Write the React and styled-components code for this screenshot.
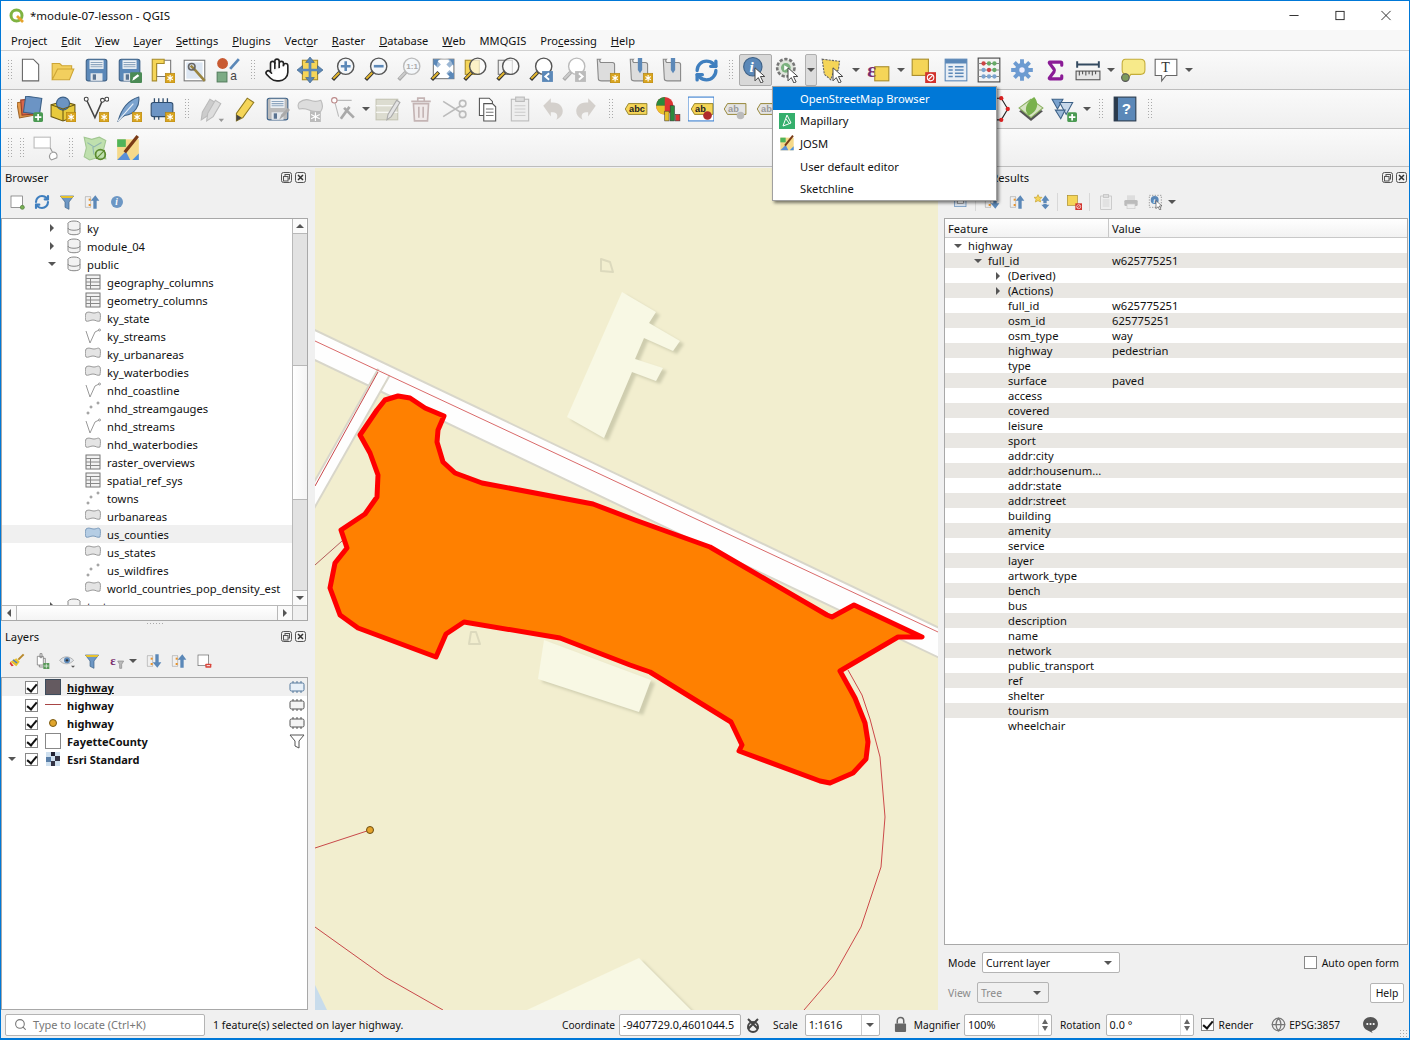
import React from 'react';
import styled, { createGlobalStyle } from 'styled-components';
import { Hand, RefreshCw, Search, Globe, Sigma } from 'lucide-react';

const GlobalStyle = createGlobalStyle`
  html, body { margin: 0; padding: 0; background: #f0f0f0; }
  body { font-family: "Noto Sans", "Open Sans", sans-serif; font-size: 11.2px; color: #111; }
`;

const BLUE = '#5b88b8';
const YEL = '#f5d558';

const Badge = () => (
  <g>
    <rect x="15" y="15" width="9" height="9" fill="#d9a520" stroke="#a87c10" strokeWidth=".5" />
    <path d="M19.5 16.5v6M17 18l5 3M22 18l-5 3" stroke="#fff" strokeWidth="1.1" />
  </g>
);
const Plus = () => (
  <g>
    <rect x="15" y="15" width="9" height="9" rx="1.5" fill="#4a9a52" />
    <path d="M19.5 16.5v6M16.5 19.5h6" stroke="#fff" strokeWidth="1.6" />
  </g>
);
const Mag = ({ children, fill = '#f4f7fa', handle = '#e5b82e', ring = '#555' }) => (
  <g>
    <path d="M9 14L2.5 21" stroke={handle === '#ccc' ? '#aaa' : '#333'} strokeWidth="3.4" />
    <path d="M8.5 14.5L3 20" stroke={handle} strokeWidth="1.8" />
    <circle cx="14.5" cy="8.5" r="7.5" fill={fill} stroke={ring} strokeWidth="1.3" />
    {children}
  </g>
);
const Cursor = () => (
  <path d="M12 10l0 12 3-3 2.5 5 2-1-2.5-5 4 0z" fill="#fff" stroke="#444" strokeWidth=".9" />
);
const Floppy = ({ c = BLUE }) => (
  <g>
    <rect x="3" y="2" width="19" height="20" rx="2" fill={c} stroke="#3d6187" />
    <rect x="6" y="3" width="13" height="8" fill="#eef2f6" />
    <path d="M7 5h11M7 7h11M7 9h11" stroke="#8ea6bf" />
    <rect x="7" y="15" width="11" height="7" fill="#e4e8ec" />
    <rect x="9" y="16" width="3" height="5" fill="#5a7391" />
  </g>
);
const Scroll = () => (
  <path d="M3 2h3c-1 1-1 2 0 3h11c1 0 2 1 2 2v15H7c-2 0-3-1-3-2z" fill="#ddd" stroke="#888" />
);
const Label = ({ t = 'abc', bg = YEL, fg = '#222' }) => (
  <g>
    <path d="M3 12l3-5h17v10H6z" fill={bg} stroke="#8b7a20" strokeWidth=".8" />
    <text x="6.5" y="15" fontSize="8.5" fontWeight="700" fontFamily="Liberation Sans" fill={fg}>{t}</text>
  </g>
);

const icons = {
  newFile: <path d="M5 2h10l5 5v15H5z" fill="#fff" stroke="#666" />,
  open: <path d="M2 6h7l2 2h9v3H7L2 21zM2 21l5-10h15l-4 10z" fill="#f2cf5e" stroke="#cda535" />,
  save: <Floppy />,
  saveAs: <g><Floppy /><rect x="13" y="14" width="11" height="10" rx="1" fill="#4a8a55" /><path d="M15 22l1-3 4-3 1.5 1.5-4 3z" fill="#fff" /></g>,
  layout: <g><path d="M7 3h13v15H7z" fill="#fff" stroke="#777" /><path d="M3 2h11v4H7v16H3z" fill={YEL} stroke="#a88c2a" /><Badge /></g>,
  layoutMgr: <g><rect x="2" y="3" width="19" height="19" fill="#fff" stroke="#777" /><rect x="4" y="5" width="15" height="15" fill="#dce6f2" /><path d="M8 8l4 4 9 10" stroke="#9a8540" strokeWidth="2.4" /><circle cx="9" cy="9" r="3" fill="none" stroke="#666" strokeWidth="1.5" /></g>,
  style: <g><circle cx="7" cy="6" r="5" fill="#c85a32" /><path d="M14 11l8-9" stroke={BLUE} strokeWidth="2.5" /><rect x="2" y="14" width="9" height="9" fill="#7cab85" stroke="#557f5f" /><text x="14" y="21" fontSize="11" fontFamily="Liberation Sans" fill="#444">a</text></g>,
  pan: <g><rect x="5" y="3" width="14" height="18" fill={YEL} stroke="#a88c2a" /><path d="M12 0l4 5h-8zM12 24l-4-5h8zM0 12l5-4v8zM24 12l-5 4V8z" fill={BLUE} stroke="#3d6187" strokeWidth=".6" /><path d="M12 4v16M4 12h16" stroke={BLUE} strokeWidth="2.5" /></g>,
  zoomIn: <Mag><path d="M14.5 4v9M10 8.5h9" stroke={BLUE} strokeWidth="2.4" /></Mag>,
  zoomOut: <Mag><path d="M10 8.5h9" stroke={BLUE} strokeWidth="2.4" /></Mag>,
  zoomOne: <Mag handle="#ccc" ring="#bbb"><text x="9.5" y="11.5" fontSize="7.5" fontWeight="700" fontFamily="Liberation Sans" fill="#aaa">1:1</text></Mag>,
  zoomFull: <g><rect x="4" y="2" width="19" height="18" fill="#fff" stroke="#777" /><path d="M4 2h6l-2 2 3 3-3 3-3-3-1 1zM23 2h-6l2 2-3 3 3 3 3-3 1 1zM23 20h-6l2-2-3-3 3-3 3 3 1-1z" fill={BLUE} /><Mag fill="#ffffff66" ring="#ffffff00" /></g>,
  zoomSel: <g><rect x="3" y="3" width="13" height="13" fill={YEL} stroke="#a88c2a" /><Mag fill="#ffffffaa" /></g>,
  zoomLayer: <g><rect x="3" y="3" width="13" height="13" fill="#eee" stroke="#777" /><Mag fill="#ffffffaa" /></g>,
  zoomLast: <g><Mag fill="#fff" /><rect x="13" y="13" width="10" height="10" fill={BLUE} /><path d="M19.5 15l-3.5 3 3.5 3" fill="none" stroke="#fff" strokeWidth="1.8" /></g>,
  zoomNext: <g><Mag fill="#fff" handle="#ccc" ring="#bbb" /><rect x="13" y="13" width="10" height="10" fill="#bbb" /><path d="M16.5 15l3.5 3-3.5 3" fill="none" stroke="#fff" strokeWidth="1.8" /></g>,
  bookNew: <g><Scroll /><Badge /></g>,
  bookPin: <g><Scroll /><path d="M10 1h4v11l-2 3-2-3z" fill={BLUE} /><Badge /></g>,
  bookShow: <g><Scroll /><path d="M10 1h4v11l-2 3-2-3z" fill={BLUE} /></g>,
  identify: <g><circle cx="10" cy="9" r="8.5" fill={BLUE} stroke="#3d6187" /><text x="7" y="14" fontSize="14" fontStyle="italic" fontWeight="700" fontFamily="Liberation Serif" fill="#fff">i</text><Cursor /></g>,
  osm: <g><circle cx="10" cy="10" r="8" fill="#dfe4dc" stroke="#777" strokeWidth="2.4" strokeDasharray="3 1.5" /><circle cx="10" cy="10" r="4.5" fill="#7bb27e" /><path d="M8.5 7.5l4 2.5-4 2.5z" fill="#fff" /><Cursor /></g>,
  select: <g><path d="M2 2l16 2-1 8-5 3-2 6-6-5z" fill={YEL} stroke="#666" strokeDasharray="2 1" /><Cursor /></g>,
  expr: <g><rect x="9" y="9" width="13" height="13" fill={YEL} stroke="#a88c2a" /><text x="2" y="18" fontSize="19" fontWeight="700" fontFamily="Liberation Serif" fill="#7a2d6e">ε</text></g>,
  deselect: <g><rect x="2" y="2" width="15" height="15" fill={YEL} stroke="#a88c2a" /><rect x="14" y="14" width="10" height="10" fill="#d2322d" /><circle cx="19" cy="19" r="3" fill="none" stroke="#fff" /><path d="M17 21l4-4" stroke="#fff" /></g>,
  table: <g><rect x="2" y="2" width="20" height="20" fill="#e8eef5" stroke={BLUE} /><rect x="2" y="2" width="20" height="4" fill={BLUE} /><path d="M5 9h4M11 9h8M5 12h4M11 12h8M5 15h4M11 15h8M5 18h4M11 18h8" stroke={BLUE} strokeWidth="1.3" /></g>,
  calc: <g><rect x="2" y="1" width="20" height="22" fill="#f4f4f4" stroke="#444" /><path d="M2 6h20M2 12h20M2 18h20" stroke="#888" /><circle cx="7" cy="6" r="2" fill="#c44" /><circle cx="12" cy="6" r="2" fill="#6a6" /><circle cx="17" cy="6" r="2" fill="#6a6" /><circle cx="7" cy="12" r="2" fill="#7ba3cf" /><circle cx="12" cy="12" r="2" fill="#c44" /><circle cx="17" cy="12" r="2" fill="#6a6" /><circle cx="7" cy="18" r="2" fill="#7ba3cf" /><circle cx="12" cy="18" r="2" fill="#7ba3cf" /><circle cx="17" cy="18" r="2" fill="#7ba3cf" /></g>,
  gear: <g><path d="M12 2v20M2 12h20M5 5l14 14M19 5L5 19" stroke="#6d9bd1" strokeWidth="3.6" /><circle cx="12" cy="12" r="6.5" fill="#6d9bd1" /><circle cx="12" cy="12" r="2.5" fill="#eef" /></g>,
  ruler: <g><path d="M2 7h20M2 4v6M22 4v6" stroke="#334a60" strokeWidth="1.8" /><rect x="1" y="13" width="22" height="8" fill="#e6e6e6" stroke="#555" /><path d="M4 13v4M7 13v3M10 13v4M13 13v3M16 13v4M19 13v3" stroke="#555" /></g>,
  tip: <g><path d="M5 2h14q4 0 4 4v6q0 4-4 4H10l-3 4-1-4q-4 0-4-4V6q0-4 3-4z" fill="#f7ea8a" stroke="#c4ad38" /><circle cx="5" cy="19" r="3.5" fill="#7c9a5c" stroke="#555" /></g>,
  textBox: <g><path d="M2 2h20v15H12l-4 5v-5H2z" fill="#fff" stroke="#666" /><text x="7.5" y="14" fontSize="13" fontFamily="Liberation Serif" fill="#333">T</text></g>,
  addLayers: <g><rect x="1" y="5" width="14" height="14" fill="#e59a4a" stroke="#a0662a" transform="rotate(-10 8 12)" /><rect x="4" y="3" width="14" height="14" fill="#d9664a" stroke="#963f2a" transform="rotate(-5 11 10)" /><rect x="7" y="1" width="15" height="15" fill="#6c94c4" stroke="#3d6187" transform="rotate(8 14 8)" /><Plus /></g>,
  box3d: <g><path d="M1 8l11-3 11 3v11l-11 4-11-4z" fill="#e8ca3c" stroke="#6b5a14" /><circle cx="12" cy="7" r="6" fill="#6c94c4" stroke="#3d6187" /><path d="M1 8l11 4 11-4M12 12v11" fill="none" stroke="#6b5a14" /><Badge /></g>,
  vertex: <g><path d="M3 3l8 17 7-16h4" fill="none" stroke="#444" strokeWidth="1.4" /><circle cx="3" cy="3" r="1.8" fill="#fff" stroke="#444" /><circle cx="18" cy="4" r="1.8" fill="#fff" stroke="#444" /><circle cx="22" cy="3" r="1.8" fill="#fff" stroke="#444" /><Badge /></g>,
  feather: <g><path d="M2 23C5 12 11 4 21 1c1 7-3 16-13 17-2 1-4 3-6 5z" fill="#7ba3cf" stroke="#3d6187" /><path d="M2 23L16 7" stroke="#e8f0f8" /><Badge /></g>,
  chip: <g><rect x="2" y="6" width="20" height="13" rx="2" fill="#6c94c4" stroke="#2f4d6e" /><path d="M5 2v4M9 2v4M13 2v4M17 2v4M5 19v3M9 19v3" stroke="#2f4d6e" strokeWidth="1.2" /><Badge /></g>,
  pencils: <g><path d="M3 22l1-7 7-12 5 3-7 12z" fill="#ccc" stroke="#bbb" /><path d="M8 23l1-7 7-12 5 3-7 12z" fill="#ddd" stroke="#bbb" /><path d="M19 21h5l-2.5 3z" fill="#999" /></g>,
  pencil: <g><path d="M5 23l0-7 10-14 6 4-10 14z" fill={YEL} stroke="#8f7a22" /><path d="M5 23l0-6 5 3z" fill="#444" /></g>,
  saveEdit: <g><Floppy c="#bbb" /><path d="M14 22l2-5 6-6 2 2-6 6z" fill="#aaa" /></g>,
  polyBadge: <g><path d="M2 6q5-4 10-2t10 0q3 6 0 10-7 1-11-1t-9-1q-2-3 0-6z" fill="#ddd" stroke="#bbb" /><rect x="12" y="14" width="10" height="10" fill="#bbb" /><path d="M17 15v8M13 17l8 4M21 17l-8 4" stroke="#fff" /></g>,
  digitize: <g><path d="M4 4l4 15M4 4h16" stroke="#bbb" /><circle cx="4" cy="4" r="2.5" fill="#fff" stroke="#b88" /><path d="M10 21l8-11M13 11l9 9" stroke="#aaa" strokeWidth="2.5" /></g>,
  editTable: <g><rect x="1" y="3" width="20" height="19" fill="#dcdcd0" stroke="#c4c4b4" /><path d="M1 9h20M1 15h20" stroke="#fff" /><path d="M11 22l1-5 8-13 3 2-8 13z" fill="#e4e4e4" stroke="#aaa" /></g>,
  trash: <g><path d="M5 7h14l-1 16H6z" fill="#f0eaea" stroke="#c4b4b4" strokeWidth="1.5" /><path d="M3 5h18M9 5V2h6v3M10 10v10M14 10v10" stroke="#c4b4b4" strokeWidth="1.5" fill="none" /></g>,
  scissors: <g><circle cx="20" cy="7" r="3" fill="none" stroke="#bbb" strokeWidth="1.5" /><circle cx="20" cy="17" r="3" fill="none" stroke="#bbb" strokeWidth="1.5" /><path d="M2 5l16 10M2 19l16-10" stroke="#bbb" strokeWidth="1.5" /></g>,
  copy: <g><path d="M5 2h9l3 3v13H5z" fill="#fff" stroke="#555" /><path d="M9 7h8l3 3v13H9z" fill="#fff" stroke="#555" /><path d="M11 12h7M11 15h7M11 18h7" stroke="#777" /></g>,
  paste: <g><rect x="4" y="3" width="16" height="20" fill="#eee" stroke="#bbb" /><rect x="8" y="1" width="8" height="4" fill="#ddd" stroke="#bbb" /><path d="M7 9h10M7 12h10M7 15h10M7 18h10" stroke="#ccc" /></g>,
  undo: <path d="M3 9l7-7v4h2c6 0 9 4 9 8 0 3-2 6-6 8 2-3 1-7-3-7h-2v4z" fill="#d4d0cc" />,
  redo: <path d="M21 9l-7-7v4h-2C6 6 3 10 3 14c0 3 2 6 6 8-2-3-1-7 3-7h2v4z" fill="#d4d0cc" />,
  abc: <Label />,
  pie: <g><circle cx="9" cy="9" r="8" fill="#d33" /><path d="M9 9V1a8 8 0 00-8 8z" fill="#2a8a3c" /><path d="M9 9H1a8 8 0 008 8z" fill="#e8c22c" /><rect x="9" y="14" width="4" height="9" fill="#e8c22c" stroke="#333" strokeWidth=".5" /><rect x="14" y="9" width="4" height="14" fill="#2a8a3c" stroke="#333" strokeWidth=".5" /><rect x="19" y="17" width="4" height="6" fill="#d33" stroke="#333" strokeWidth=".5" /></g>,
  abPin: <g><rect x="0" y="1" width="24" height="22" fill="#fff" stroke="#3a7fd0" /><Label t="ab" /><circle cx="18" cy="18" r="4" fill="#b02b2b" /></g>,
  abOff: <g><Label t="ab" bg="#e4e4e4" fg="#999" /><circle cx="18" cy="18" r="3.5" fill="#bbb" /></g>,
  abOff2: <g><Label t="abc" bg="#e4e4e4" fg="#999" /></g>,
  hexEdge: <g><path d="M7 2l8 0 6 10-6 10H7L1 12z" fill="none" stroke="#222" /><circle cx="21" cy="12" r="2" fill="#d22" /><circle cx="15" cy="2" r="2" fill="#d22" /><circle cx="15" cy="22" r="2" fill="#d22" /></g>,
  leaf: <g><path d="M12 23L1 14l11-7 11 7z" fill="#555" /><path d="M12 20L1 11l11-8 11 8z" fill="#d8e4c4" stroke="#8ab060" /><path d="M10 18C4 12 9 5 15 1c5 6 3 13-5 17z" fill="#79b14c" /></g>,
  triangles: <g><path d="M1 3h10l-5 9z" fill="#7ba3cf" stroke="#3d6187" /><path d="M8 6h12l-6 11z" fill="#c8d8ea" stroke="#3d6187" /><path d="M4 13h9l-4 8z" fill="#9ab8d8" stroke="#3d6187" /><Plus /></g>,
  helpBook: <g><rect x="2" y="1" width="20" height="22" fill="#5b88b8" stroke="#2a3a4c" /><rect x="2" y="1" width="3.5" height="22" fill="#2a3a4c" /><text x="9" y="17" fontSize="14" fontWeight="700" fontFamily="Liberation Sans" fill="#fff">?</text></g>,
  rectHand: <g><rect x="1" y="2" width="15" height="10" fill="#fff" stroke="#bbb" /><path d="M16 12l2 4M17 23c-3-2-2-6 1-7s5 2 4 5z" fill="#fff" stroke="#999" /></g>,
  osmMap: <g><path d="M2 2l7 2 7-2 6 3-2 8 2 9-8-1-7 2-5-3 2-8z" fill="#bfe0ae" stroke="#a2c792" /><path d="M5 7l6 4 7-4M10 11l1 7" stroke="#8fb4b0" fill="none" /><circle cx="17" cy="18" r="4.5" fill="none" stroke="#5b8b2e" strokeWidth="1.6" /><path d="M13 22l8-8" stroke="#5b8b2e" /></g>,
  josm: <g><rect x="2" y="4" width="20" height="19" fill="#f5d98a" /><rect x="2" y="4" width="8" height="7" fill="#4fb45a" /><path d="M10 15l4 8H2z" fill="#5a8fd8" /><path d="M16 23l6-6v6z" fill="#4a90e0" /><path d="M9 16L21 1" stroke="#7a3b16" strokeWidth="3" /></g>,
  addGeo: <g><rect x="3" y="3" width="17" height="17" fill="#fff" stroke="#666" /><circle cx="20" cy="20" r="3" fill="#7ab055" stroke="#4a7a35" /></g>,
  filter: <g><path d="M2 3h20l-7 9v11l-6-3v-8z" fill="#6d97c4" stroke="#3d6187" /><path d="M2 3h20l-2 3H4z" fill="#e8c22c" /></g>,
  collapse: <g><rect x="2" y="4" width="8" height="16" fill="none" stroke="#888" strokeDasharray="2 1" /><rect x="7" y="7" width="3" height="3" fill="#e8932c" /><rect x="7" y="15" width="3" height="3" fill="#e8932c" /><path d="M17 2l6 8h-4v12h-5V10h-4z" fill="#5b88b8" /></g>,
  expand: <g><rect x="2" y="4" width="8" height="16" fill="none" stroke="#888" strokeDasharray="2 1" /><rect x="7" y="7" width="3" height="3" fill="#e8932c" /><rect x="7" y="15" width="3" height="3" fill="#e8932c" /><path d="M17 22l6-8h-4V2h-5v12h-4z" fill="#5b88b8" /></g>,
  infoDot: <g><circle cx="12" cy="12" r="9" fill="#6d97c4" /><text x="9.5" y="17" fontSize="14" fontStyle="italic" fontWeight="700" fontFamily="Liberation Serif" fill="#fff">i</text></g>,
  brush: <g><path d="M14 10L22 2" stroke="#b8892c" strokeWidth="3" /><path d="M2 13l9-5 5 5-5 7z" fill="#e8c22c" /><path d="M2 13l5 6-3 1-3-4z" fill="#d33" /><path d="M6 10l6 5" stroke="#4a78c0" strokeWidth="2" /></g>,
  addGroup: <g><path d="M8 8h9v13H8z" fill="#eee" stroke="#666" /><path d="M5 5h9v13H5z" fill="#fff" stroke="#666" /><path d="M9 1h3v6H9z" fill="none" stroke="#666" /><rect x="14" y="15" width="9" height="9" fill="#5a9a5a" /><path d="M18.5 16v7M15 19.5h7" stroke="#fff" /></g>,
  eye: <g><path d="M1 11c5-7 15-7 21 0-6 7-16 7-21 0z" fill="#dfe3e8" stroke="#999" /><circle cx="12" cy="11" r="4.5" fill="#5b88b8" /><circle cx="12" cy="11" r="1.8" fill="#333" /><path d="M18 19h6l-3 3z" fill="#555" /></g>,
  exprFilter: <g><text x="2" y="18" fontSize="19" fontWeight="700" fontFamily="Liberation Serif" fill="#7a2d6e">ε</text><path d="M13 12h9l-3 5v6h-3v-6z" fill="#bbb" stroke="#888" /></g>,
  removeRect: <g><rect x="3" y="3" width="16" height="16" fill="#fff" stroke="#666" /><rect x="14" y="16" width="9" height="6" rx="1" fill="#d9463c" /><path d="M16 19h5" stroke="#fff" strokeWidth="1.4" /></g>,
  identMode: <g><rect x="4" y="5" width="17" height="14" fill="#dce6f2" stroke={BLUE} /><rect x="8" y="10" width="9" height="4" fill="#fff" stroke="#777" /></g>,
  printer: <g><rect x="6" y="2" width="12" height="7" fill="#ddd" /><rect x="2" y="9" width="20" height="9" rx="2" fill="#bbb" /><rect x="6" y="15" width="12" height="7" fill="#eee" stroke="#ccc" /></g>,
  identTool: <g><rect x="2" y="2" width="18" height="18" fill="none" stroke="#777" strokeDasharray="2 2" /><circle cx="10" cy="9" r="6" fill={BLUE} /><text x="8" y="13" fontSize="10" fontStyle="italic" fontWeight="700" fontFamily="Liberation Serif" fill="#fff">i</text><Cursor /></g>,
  expandNew: <g><path d="M6 1l2 4 4 0-3 3 1 4-4-2-4 2 1-4-3-3 4 0z" fill={YEL} stroke="#c4a030" /><path d="M17 2l6 8h-4v4h-5v-4h-3z" fill="#5b88b8" /><path d="M17 23l6-7h-4v-1h-5v1h-3z" fill="#5b88b8" /></g>,
};

// toolbars -------------------------------------------------------------------
const topRows = [
  {
    height: 39,
    items: [':', 'newFile', 'open', 'save', 'saveAs', 'layout', 'layoutMgr', 'style', '|', 'hand', 'pan', 'zoomIn', 'zoomOut', '~zoomOne', 'zoomFull', 'zoomSel', 'zoomLayer', 'zoomLast', '~zoomNext', 'bookNew', 'bookPin', 'bookShow', 'refresh', '|', '!identify', 'osm', 'v!', 'select', 'v', 'expr', 'v', 'deselect', 'table', 'calc', 'gear', 'sigma', 'ruler', 'v', 'tip', 'textBox', 'v'],
  },
  {
    height: 39,
    items: [':', 'addLayers', 'box3d', 'vertex', 'feather', 'chip', '|', 'pencils', 'pencil', 'saveEdit', 'polyBadge', 'digitize', 'v', 'editTable', 'trash', 'scissors', 'copy', 'paste', 'undo', 'redo', '|', 'abc', 'pie', 'abPin', 'abOff', 'abOff2', '', '', '', '', '', '', 'hexEdge', 'leaf', 'triangles', 'v', '|', 'helpBook', '|'],
  },
  {
    height: 38,
    items: [':', '|', 'rectHand', '|', 'osmMap', 'josm'],
  },
];

const treeRows = [
  [1, 'right', 'db', 'ky'],
  [1, 'right', 'db', 'module_04'],
  [1, 'down', 'db', 'public'],
  [2, '', 'table', 'geography_columns'],
  [2, '', 'table', 'geometry_columns'],
  [2, '', 'poly', 'ky_state'],
  [2, '', 'line', 'ky_streams'],
  [2, '', 'poly', 'ky_urbanareas'],
  [2, '', 'poly', 'ky_waterbodies'],
  [2, '', 'line', 'nhd_coastline'],
  [2, '', 'dots', 'nhd_streamgauges'],
  [2, '', 'line', 'nhd_streams'],
  [2, '', 'poly', 'nhd_waterbodies'],
  [2, '', 'table', 'raster_overviews'],
  [2, '', 'table', 'spatial_ref_sys'],
  [2, '', 'dots', 'towns'],
  [2, '', 'poly', 'urbanareas'],
  [2, '', 'polyBlue', 'us_counties'],
  [2, '', 'poly', 'us_states'],
  [2, '', 'dots', 'us_wildfires'],
  [2, '', 'poly', 'world_countries_pop_density_est'],
  [1, 'right', 'db', 'test'],
];

const treeIcon = {
  db: <g fill="#f2f2f2" stroke="#888"><ellipse cx="8" cy="3.5" rx="6" ry="2.5" /><path d="M2 3.5v9c0 3 12 3 12 0v-9" /><path d="M2 8c0 3 12 3 12 0" fill="none" /></g>,
  table: <g><rect x="1" y="1" width="14" height="14" fill="#f2f2f2" stroke="#777" /><path d="M1 4.5h14M1 8h14M1 11.5h14M5.5 4.5V15" stroke="#888" fill="none" /></g>,
  poly: <path d="M1 3c3-2 5 0 8 0s4-2 6 0c1 3 0 6 0 8-3 1-4-1-7-1s-5 2-7 1C0 9 0 6 1 3z" fill="#e4e4e4" stroke="#999" />,
  polyBlue: <path d="M1 3c3-2 5 0 8 0s4-2 6 0c1 3 0 6 0 8-3 1-4-1-7-1s-5 2-7 1C0 9 0 6 1 3z" fill="#b5cde4" stroke="#7d9cbc" />,
  line: <g fill="none" stroke="#999"><path d="M1 3l4 12 5-11 4-2" /><circle cx="14.5" cy="2" r="1" /></g>,
  dots: <g fill="#fff" stroke="#888"><circle cx="3" cy="13" r="1" /><circle cx="6" cy="7" r="1" /><circle cx="13" cy="3" r="1" /></g>,
};

const layerRows = [
  { symbol: 'fill', name: 'highway', active: true, mark: 'chip' },
  { symbol: 'line', name: 'highway', mark: 'chip' },
  { symbol: 'point', name: 'highway', mark: 'chip' },
  { symbol: 'empty', name: 'FayetteCounty', mark: 'filter' },
  { symbol: 'raster', name: 'Esri Standard', open: true },
];

const resultRows = [
  [0, 'down', 'highway', ''],
  [1, 'down', 'full_id', 'w625775251'],
  [2, 'right', '(Derived)', ''],
  [2, 'right', '(Actions)', ''],
  [2, '', 'full_id', 'w625775251'],
  [2, '', 'osm_id', '625775251'],
  [2, '', 'osm_type', 'way'],
  [2, '', 'highway', 'pedestrian'],
  [2, '', 'type', ''],
  [2, '', 'surface', 'paved'],
  ...['access', 'covered', 'leisure', 'sport', 'addr:city', 'addr:housenum...', 'addr:state', 'addr:street', 'building', 'amenity', 'service', 'layer', 'artwork_type', 'bench', 'bus', 'description', 'name', 'network', 'public_transport', 'ref', 'shelter', 'tourism', 'wheelchair'].map((n) => [2, '', n, '']),
];

const menus = [
  ['Pro', 'j', 'ect'], ['', 'E', 'dit'], ['', 'V', 'iew'], ['', 'L', 'ayer'], ['', 'S', 'ettings'], ['', 'P', 'lugins'],
  ['Vect', 'o', 'r'], ['', 'R', 'aster'], ['', 'D', 'atabase'], ['', 'W', 'eb'], ['MMQGIS', '', ''], ['Pro', 'c', 'essing'], ['', 'H', 'elp'],
];

const Ico = ({ name, size = 26 }) => (
  <svg width={size} height={size} viewBox="0 0 24 24">{icons[name]}</svg>
);

const ToolbarIcon = ({ item }) => {
  if (item === ':') return <HandleSlot $narrow><Dots /></HandleSlot>;
  if (item === '|') return <HandleSlot><Dots /></HandleSlot>;
  if (item === 'v') return <DropSlot><Arrow /></DropSlot>;
  if (item === 'v!') return <DropSlot $pressed><Arrow /></DropSlot>;
  if (item === '') return <Tool />;
  if (item === 'hand') return <Tool><Hand size={26} fill="#fff" color="#222" strokeWidth={1.5} /></Tool>;
  if (item === 'refresh') return <Tool><RefreshCw size={25} color="#3f7fbf" strokeWidth={3.2} /></Tool>;
  if (item === 'sigma') return <Tool><Sigma size={25} color="#8a1b96" strokeWidth={3} /></Tool>;
  const active = item[0] === '!';
  const off = item[0] === '~';
  const name = active || off ? item.slice(1) : item;
  return <Tool $active={active}><Ico name={name} /></Tool>;
};

const DockHead = ({ title }) => (
  <DockHeader>
    <span>{title}</span>
    <DockButtons>
      <DockButton viewBox="0 0 11 11"><rect x=".5" y=".5" width="10" height="10" rx="2" fill="none" stroke="#555" /><rect x="4" y="2.5" width="4.5" height="4.5" fill="none" stroke="#555" /><rect x="2.5" y="4.5" width="4.5" height="4.5" fill="#eee" stroke="#555" /></DockButton>
      <DockButton viewBox="0 0 11 11"><rect x=".5" y=".5" width="10" height="10" rx="2" fill="none" stroke="#555" /><path d="M3 3l5 5M8 3l-5 5" stroke="#333" strokeWidth="1.5" /></DockButton>
    </DockButtons>
  </DockHeader>
);

export default function App() {
  return (
    <>
      <GlobalStyle />
      <Window>
        <TitleBar>
          <QgisLogo viewBox="0 0 16 16">
            <circle cx="7.5" cy="7.5" r="5.5" fill="none" stroke="#7fb342" strokeWidth="3" />
            <path d="M8 8l6 6" stroke="#e5a32b" strokeWidth="2.6" />
          </QgisLogo>
          <TitleText>*module-07-lesson - QGIS</TitleText>
          <WinButtons>
            <WinButton viewBox="0 0 12 12"><path d="M1 6h10" stroke="#222" /></WinButton>
            <WinButton viewBox="0 0 12 12"><rect x="1.5" y="1.5" width="9" height="9" fill="none" stroke="#222" /></WinButton>
            <WinButton viewBox="0 0 12 12"><path d="M1 1l10 10M11 1L1 11" stroke="#222" /></WinButton>
          </WinButtons>
        </TitleBar>
        <MenuBar>
          {menus.map(([a, u, b]) => (
            <MenuItem key={a + u + b}>{a}<u>{u}</u>{b}</MenuItem>
          ))}
        </MenuBar>
        {topRows.map((row, i) => (
          <ToolRow key={i} $height={row.height}>
            {row.items.map((item, j) => <ToolbarIcon key={j} item={item} />)}
          </ToolRow>
        ))}
        <Main>
          <LeftDock>
            <DockHead title="Browser" />
            <DockTools>
              {['addGeo', 'refresh', 'filter', 'collapse', 'infoDot'].map((n) => (
                <SmallTool key={n}>{n === 'refresh' ? <RefreshCw size={16} color="#3f7fbf" strokeWidth={3.2} /> : <Ico name={n} size={16} />}</SmallTool>
              ))}
            </DockTools>
            <TreeFrame>
              <TreeInner>
                <TreeList>
                  {treeRows.map(([depth, arrow, icon, name]) => (
                    <TreeRow key={name} $active={name === 'us_counties'} $depth={depth}>
                      {depth === 1 && <Twisty>{arrow && <Caret $dir={arrow} />}</Twisty>}
                      <TreeIcon viewBox="0 0 16 16" $depth={depth}>{treeIcon[icon]}</TreeIcon>
                      <span>{name}</span>
                    </TreeRow>
                  ))}
                </TreeList>
                <VScroll>
                  <ScrollEnd><Caret $dir="up" /></ScrollEnd>
                  <ScrollTrack $h={131} />
                  <ScrollThumb />
                  <ScrollTrack $fill />
                  <ScrollEnd><Caret $dir="down" /></ScrollEnd>
                </VScroll>
              </TreeInner>
              <HScroll>
                <ScrollEnd $wide><Caret $dir="left" /></ScrollEnd>
                <HThumb />
                <ScrollEnd $wide><Caret $dir="right" /></ScrollEnd>
                <Corner />
              </HScroll>
            </TreeFrame>
            <Splitter><SplitDots /></Splitter>
            <DockHead title="Layers" />
            <DockTools>
              {['brush', 'addGroup', 'eye', 'filter', 'exprFilter'].map((n) => (
                <SmallTool key={n}><Ico name={n} size={16} /></SmallTool>
              ))}
              <MiniDrop><Arrow /></MiniDrop>
              {['expand', 'collapse', 'removeRect'].map((n) => (
                <SmallTool key={n}><Ico name={n} size={16} /></SmallTool>
              ))}
            </DockTools>
            <LayerList>
              {layerRows.map((l, i) => (
                <LayerRow key={i} $active={l.active}>
                  <LayerTwisty>{l.open && <Caret $dir="down" />}</LayerTwisty>
                  <LayerCheck $on />
                  <LayerSymbol $kind={l.symbol}>
                    {l.symbol === 'raster' && (
                      <svg width="14" height="14" viewBox="0 0 14 14">
                        <rect width="14" height="14" fill="#cfe0ef" />
                        <rect x="5" width="4" height="4" fill="#223" />
                        <rect y="5" width="5" height="5" fill="#5a7fa8" />
                        <rect x="9" y="4" width="5" height="5" fill="#334" />
                        <rect x="5" y="9" width="4" height="5" fill="#334" />
                      </svg>
                    )}
                  </LayerSymbol>
                  <LayerName $active={l.active}>{l.name}</LayerName>
                  {l.mark && (
                    <LayerMark viewBox="0 0 16 16">
                      {l.mark === 'chip' ? (
                        <g fill={l.active ? '#e8f0f8' : '#f4f4f4'} stroke={l.active ? '#55789c' : '#555'}>
                          <rect x="1" y="4" width="14" height="8" rx="1.5" />
                          <path d="M4 2v2M8 2v2M12 2v2M4 12v2M8 12v2M12 12v2" />
                        </g>
                      ) : (
                        <path d="M1 2h14l-5 6v7l-4-2V8z" fill="#fff" stroke="#555" />
                      )}
                    </LayerMark>
                  )}
                </LayerRow>
              ))}
            </LayerList>
          </LeftDock>

          <VSplit $left />
          <MapCanvas>
            <MapSvg viewBox="315 168 623 842">
              <defs>
                <filter id="bldg" x="-20%" y="-20%" width="140%" height="140%">
                  <feDropShadow dx="4" dy="3" stdDeviation="1.5" floodColor="#cfcdaf" />
                </filter>
              </defs>
              <rect x="315" y="168" width="623" height="842" fill="#f2eecf" />
              <path d="M315 985l12 25h-12z" fill="#c8dcec" />
              <g fill="#f8f8e4" filter="url(#bldg)">
                <path d="M622 292l34 20-7 11 31 18-7 10-29-13-9 21 28 9-7 13-24-9-28 66-37-21z" />
                <path d="M544 640l107 40-12 32-101-33z" />
                <path d="M527 1010l112-52 52 52z" />
              </g>
              <g fill="#f2eecf" stroke="#dcd9bd" strokeWidth="2" strokeLinejoin="round">
                <path d="M601 259l9 3 3 10-12-1z" />
                <path d="M471 632l5 0 4 12-11 0z" />
              </g>
              <g fill="none">
                <path d="M300 338L950 648" stroke="#d8d6ca" strokeWidth="29" />
                <path d="M300 338L950 648" stroke="#fefefe" strokeWidth="25" />
                <path d="M384 372L300 520" stroke="#d8d6ca" strokeWidth="15" />
                <path d="M384 372L300 520" stroke="#fefefe" strokeWidth="11" />
                <path d="M315 341L938 632" stroke="#d96a6a" />
                <path d="M378 372L315 486" stroke="#c8484a" />
                <path d="M315 565L342 541" stroke="#b25a5a" />
                <path d="M848 670l14 25 8 24 10 38 5 60-4 50-20 60-27 48-30 35" stroke="#cc4a4a" />
                <path d="M315 848L370 830" stroke="#c8484a" />
                <path d="M315 927l70 50 58 33" stroke="#c8484a" />
              </g>
              <circle cx="370" cy="830" r="3.5" fill="#e5a32b" stroke="#6b4d12" />
              <path
                d="M360 435L377 410 385 400 398 396 410 398 425 408 444 416 438 430 437 442 443 462 455 473 482 483 593 504 635 520 710 547 827 615 832 617 854 605 922 637 898 637 840 671 855 698 865 723 868 742 866 759 853 773 830 783 820 781 739 751 742 745 731 722 650 672 630 665 560 638 464 622 446 634 436 657 358 628 340 615 330 588 335 563 347 548 341 530 365 514 377 497 378 475 370 453z"
                fill="#ff8000"
                stroke="#ff0000"
                strokeWidth="5"
                strokeLinejoin="round"
              />
            </MapSvg>
          </MapCanvas>
          <VSplit />

          <RightDock>
            <DockHead title="Identify Results" />
            <DockTools>
              <SmallTool><Ico name="identMode" size={16} /></SmallTool>
              <ToolGap />
              <SmallTool><Ico name="expand" size={16} /></SmallTool>
              <SmallTool><Ico name="collapse" size={16} /></SmallTool>
              <SmallTool><Ico name="expandNew" size={16} /></SmallTool>
              <ToolGap />
              <SmallTool><Ico name="deselect" size={16} /></SmallTool>
              <ToolGap />
              <SmallTool><Ico name="paste" size={16} /></SmallTool>
              <SmallTool><Ico name="printer" size={16} /></SmallTool>
              <SmallTool><Ico name="identTool" size={16} /></SmallTool>
              <MiniDrop><Arrow /></MiniDrop>
            </DockTools>
            <ResultTable>
              <ResultHead>
                <HeadCell $first>Feature</HeadCell>
                <HeadCell>Value</HeadCell>
              </ResultHead>
              {resultRows.map(([depth, arrow, name, value], i) => (
                <ResultRow key={i} $alt={i % 2 === 1}>
                  <FeatureCell $depth={depth}>
                    <ResultTwisty>{arrow && <Caret $dir={arrow} />}</ResultTwisty>
                    {name}
                  </FeatureCell>
                  <ValueCell>{value}</ValueCell>
                </ResultRow>
              ))}
            </ResultTable>
            <FormArea>
              <FormRow>
                <FormLabel>Mode</FormLabel>
                <Combo $width={138}>Current layer<Arrow /></Combo>
                <AutoOpen><OptionCheck />Auto open form</AutoOpen>
              </FormRow>
              <FormRow>
                <FormLabel $off>View</FormLabel>
                <Combo $width={72} $off>Tree<Arrow /></Combo>
                <HelpButton>Help</HelpButton>
              </FormRow>
            </FormArea>
          </RightDock>
        </Main>

        <StatusBar>
          <Locator><Search size={13} color="#777" />Type to locate (Ctrl+K)</Locator>
          <StatusMessage>1 feature(s) selected on layer highway.</StatusMessage>
          <StatusLabel>Coordinate</StatusLabel>
          <Field $width={122}>-9407729.0,4601044.5</Field>
          <StatusIcon viewBox="0 0 16 16">
            <path d="M3 2l10 10M13 2L3 12" stroke="#444" strokeWidth="2" />
            <circle cx="8" cy="10" r="5" fill="none" stroke="#444" strokeWidth="2" />
          </StatusIcon>
          <ScaleLabel>Scale</ScaleLabel>
          <Field $width={75}>1:1616<FieldDrop><Arrow /></FieldDrop></Field>
          <LockIcon viewBox="0 0 14 18">
            <path d="M3.5 8V5a3.5 3.5 0 017 0v3" fill="none" stroke="#666" strokeWidth="1.6" />
            <rect x="1" y="8" width="12" height="9" rx="1" fill="#666" />
          </LockIcon>
          <StatusLabel>Magnifier</StatusLabel>
          <Field $width={88}>100%<Spin><SpinUp /><SpinDown /></Spin></Field>
          <RotationLabel>Rotation</RotationLabel>
          <Field $width={88}>0.0 °<Spin><SpinUp /><SpinDown /></Spin></Field>
          <RenderBox><OptionCheck $on />Render</RenderBox>
          <Epsg><Globe size={15} color="#777" />EPSG:3857</Epsg>
          <BubbleIcon viewBox="0 0 16 16">
            <path d="M8 1c4 0 7 3 7 6.5S12 14 9 14l1 2-5-2.5C2.5 12.5 1 10 1 7.5 1 4 4 1 8 1z" fill="#555" />
            <circle cx="5" cy="7.5" r="1" fill="#fff" />
            <circle cx="8" cy="7.5" r="1" fill="#fff" />
            <circle cx="11" cy="7.5" r="1" fill="#fff" />
          </BubbleIcon>
          <Grip />
        </StatusBar>

        <Popup>
          <PopupItem $active>OpenStreetMap Browser</PopupItem>
          <PopupItem>
            <PopupIcon viewBox="0 0 16 16">
              <rect width="16" height="16" fill="#35af6d" />
              <path d="M8 2L4 13l8-3zM7 6l3 4" fill="none" stroke="#fff" />
            </PopupIcon>
            Mapillary
          </PopupItem>
          <PopupItem>
            <PopupIcon viewBox="0 0 24 24">{icons.josm}</PopupIcon>
            JOSM
          </PopupItem>
          <PopupItem>User default editor</PopupItem>
          <PopupItem>Sketchline</PopupItem>
        </Popup>
      </Window>
    </>
  );
}

const Window = styled.div`
  position: relative;
  width: 1410px;
  height: 1040px;
  box-sizing: border-box;
  border: 1px solid #0078d7;
  border-bottom-width: 2px;
  background: #f0f0f0;
  display: flex;
  flex-direction: column;
  overflow: hidden;
`;
const TitleBar = styled.div`
  height: 29px;
  flex: none;
  background: #fff;
  display: flex;
  align-items: center;
  padding-left: 8px;
`;
const QgisLogo = styled.svg`
  width: 16px;
  height: 16px;
`;
const TitleText = styled.span`
  margin-left: 5px;
  font-size: 11.5px;
`;
const WinButtons = styled.div`
  margin-left: auto;
  display: flex;
`;
const WinButton = styled.svg`
  width: 11px;
  height: 11px;
  padding: 0 17.5px;
`;
const MenuBar = styled.div`
  height: 21px;
  box-sizing: border-box;
  flex: none;
  display: flex;
  align-items: center;
  padding-left: 3px;
  background: #f8f8f8;
  border-bottom: 1px solid #d0d0d0;
  font-size: 11.1px;
`;
const MenuItem = styled.span`
  padding: 0 7px;
`;
const ToolRow = styled.div`
  height: ${({ $height }) => $height}px;
  flex: none;
  box-sizing: border-box;
  display: flex;
  align-items: center;
  padding-left: 4px;
  background: linear-gradient(#fafafa, #efefef);
  border-bottom: 1px solid #bdbdbd;
`;
const Tool = styled.div`
  width: 33px;
  height: 32px;
  flex: none;
  box-sizing: border-box;
  display: flex;
  align-items: center;
  justify-content: center;
  border-radius: 2px;
  background: ${({ $active }) => ($active ? '#d8d8d8' : 'transparent')};
  border: 1px solid ${({ $active }) => ($active ? '#ababab' : 'transparent')};
`;
const HandleSlot = styled.div`
  width: ${({ $narrow }) => ($narrow ? 8.5 : 16)}px;
  height: 26px;
  flex: none;
  display: flex;
  align-items: center;
  justify-content: center;
`;
const Dots = styled.div`
  width: 5px;
  height: 22px;
  background-image: radial-gradient(circle, #aaa 0.8px, transparent 1px);
  background-size: 3px 3px;
`;
const DropSlot = styled.div`
  width: 12px;
  height: 32px;
  flex: none;
  box-sizing: border-box;
  display: flex;
  align-items: center;
  justify-content: center;
  border-radius: 2px;
  ${({ $pressed }) => $pressed && 'background: #dcdcdc; border: 1px solid #b0b0b0;'}
`;
const Arrow = styled.i`
  display: block;
  width: 0;
  height: 0;
  flex: none;
  border-left: 4px solid transparent;
  border-right: 4px solid transparent;
  border-top: 4px solid #555;
`;
const Caret = styled.i`
  display: block;
  width: 0;
  height: 0;
  border-style: solid;
  border-color: transparent;
  ${({ $dir }) => $dir === 'down' && 'border-width: 4px 4px 0; border-top-color: #555;'}
  ${({ $dir }) => $dir === 'up' && 'border-width: 0 4px 4px; border-bottom-color: #555;'}
  ${({ $dir }) => $dir === 'right' && 'border-width: 4px 0 4px 4px; border-left-color: #555;'}
  ${({ $dir }) => $dir === 'left' && 'border-width: 4px 4px 4px 0; border-right-color: #555;'}
`;
const Main = styled.div`
  flex: 1;
  min-height: 0;
  display: flex;
`;
const LeftDock = styled.div`
  width: 307px;
  flex: none;
  display: flex;
  flex-direction: column;
`;
const RightDock = styled.div`
  flex: 1;
  min-width: 0;
  display: flex;
  flex-direction: column;
`;
const VSplit = styled.div`
  width: ${({ $left }) => ($left ? 7 : 6)}px;
  flex: none;
`;
const DockHeader = styled.div`
  height: 21px;
  flex: none;
  display: flex;
  align-items: center;
  justify-content: space-between;
  padding: 0 2px 0 4px;
`;
const DockButtons = styled.div`
  display: flex;
  gap: 3px;
`;
const DockButton = styled.svg`
  width: 11px;
  height: 11px;
`;
const DockTools = styled.div`
  height: 30px;
  flex: none;
  box-sizing: border-box;
  display: flex;
  align-items: center;
  padding: 0 0 2px 3px;
`;
const SmallTool = styled.div`
  width: 25px;
  height: 22px;
  flex: none;
  display: flex;
  align-items: center;
  justify-content: center;
`;
const ToolGap = styled.div`
  width: 1px;
  height: 18px;
  flex: none;
  margin: 0 3px;
  background: #d8d8d8;
`;
const MiniDrop = styled.div`
  width: 12px;
  flex: none;
`;
const TreeFrame = styled.div`
  height: 403px;
  flex: none;
  box-sizing: border-box;
  border: 1px solid #a8a8a8;
  background: #fff;
  display: flex;
  flex-direction: column;
`;
const TreeInner = styled.div`
  flex: 1;
  min-height: 0;
  display: flex;
`;
const TreeList = styled.div`
  flex: 1;
  min-width: 0;
  overflow: hidden;
`;
const TreeRow = styled.div`
  height: 18px;
  display: flex;
  align-items: center;
  padding-left: ${({ $depth }) => ($depth === 1 ? 40 : 79)}px;
  background: ${({ $active }) => ($active ? '#f0f0f0' : 'transparent')};
  white-space: nowrap;
`;
const Twisty = styled.span`
  width: 20px;
  flex: none;
  display: flex;
  justify-content: center;
`;
const LayerTwisty = styled.span`
  width: 16px;
  flex: none;
  margin-left: 2px;
  display: flex;
  justify-content: center;
`;
const TreeIcon = styled.svg`
  width: 16px;
  height: 16px;
  flex: none;
  margin-right: ${({ $depth }) => ($depth === 1 ? 5 : 6)}px;
  margin-left: 4px;
`;
const VScroll = styled.div`
  width: 14px;
  flex: none;
  display: flex;
  flex-direction: column;
  border-left: 1px solid #b8b8b8;
`;
const ScrollEnd = styled.div`
  width: ${({ $wide }) => ($wide ? 14 : 13)}px;
  height: 14px;
  flex: none;
  box-sizing: border-box;
  display: flex;
  align-items: center;
  justify-content: center;
  background: #fafafa;
`;
const ScrollTrack = styled.div`
  height: ${({ $h }) => $h || 1}px;
  flex: ${({ $fill }) => ($fill ? 1 : 'none')};
  background: #e2e2e2;
  border-top: 1px solid #b8b8b8;
  border-bottom: 1px solid #b8b8b8;
`;
const ScrollThumb = styled.div`
  height: 133px;
  flex: none;
  background: linear-gradient(90deg, #fff, #f4f4f4);
`;
const HScroll = styled.div`
  height: 14px;
  flex: none;
  display: flex;
  border-top: 1px solid #b8b8b8;
`;
const HThumb = styled.div`
  flex: 1;
  background: linear-gradient(#fff, #f4f4f4);
  border-left: 1px solid #b8b8b8;
  border-right: 1px solid #b8b8b8;
`;
const Corner = styled.div`
  width: 14px;
  background: #f0f0f0;
  border-left: 1px solid #b8b8b8;
`;
const Splitter = styled.div`
  height: 5px;
  flex: none;
  display: flex;
  align-items: center;
  justify-content: center;
`;
const SplitDots = styled.div`
  width: 18px;
  height: 3px;
  background-image: radial-gradient(circle, #aaa 0.7px, transparent 1px);
  background-size: 3px 3px;
`;
const LayerList = styled.div`
  flex: 1;
  min-height: 0;
  box-sizing: border-box;
  border: 1px solid #a8a8a8;
  background: #fff;
  margin-bottom: 1px;
`;
const LayerRow = styled.div`
  height: 18px;
  display: flex;
  align-items: center;
  padding-right: 2px;
  font-size: 11px;
  background: ${({ $active }) => ($active ? '#f0f0f0' : 'transparent')};
`;
const OptionCheck = styled.span`
  width: 13px;
  height: 13px;
  flex: none;
  box-sizing: border-box;
  border: 1px solid #888;
  background: #fff;
  position: relative;
  margin-right: 5px;
  ${({ $on }) => $on && `
    &::after {
      content: '';
      position: absolute;
      left: 3px;
      top: 0;
      width: 4px;
      height: 8px;
      border: solid #111;
      border-width: 0 2px 2px 0;
      transform: rotate(40deg);
    }
  `}
`;
const LayerCheck = styled(OptionCheck)`
  margin: 0 7px 0 5px;
`;
const LayerSymbol = styled.span`
  width: 16px;
  height: 16px;
  flex: none;
  box-sizing: border-box;
  display: flex;
  align-items: center;
  justify-content: center;
  ${({ $kind }) => $kind === 'fill' && 'background: #645a60; border: 1px solid #3c4c5c;'}
  ${({ $kind }) => $kind === 'empty' && 'background: #fff; border: 1px solid #888;'}
  ${({ $kind }) => $kind === 'line' && 'background: linear-gradient(transparent 7px, #a84545 7px, #a84545 8px, transparent 8px);'}
  ${({ $kind }) => $kind === 'point' && `
    &::after {
      content: '';
      width: 6px;
      height: 6px;
      border-radius: 50%;
      background: #e0a52c;
      border: 1px solid #7a5a12;
    }
  `}
`;
const LayerName = styled.span`
  margin-left: 6px;
  font-weight: 700;
  text-decoration: ${({ $active }) => ($active ? 'underline' : 'none')};
`;
const LayerMark = styled.svg`
  width: 16px;
  height: 16px;
  margin-left: auto;
`;
const MapCanvas = styled.div`
  width: 623px;
  flex: none;
  padding-top: 1px;
  box-sizing: border-box;
`;
const MapSvg = styled.svg`
  display: block;
  width: 623px;
  height: 842px;
`;
const ResultTable = styled.div`
  flex: 1;
  min-height: 0;
  margin-right: 1px;
  box-sizing: border-box;
  border: 1px solid #a8a8a8;
  background: #fff;
`;
const ResultHead = styled.div`
  height: 19px;
  box-sizing: border-box;
  display: flex;
  background: linear-gradient(#fff, #f2f2f2);
  border-bottom: 1px solid #c8c8c8;
`;
const HeadCell = styled.div`
  width: ${({ $first }) => ($first ? '160px' : 'auto')};
  flex: ${({ $first }) => ($first ? 'none' : 1)};
  padding-left: 3px;
  line-height: 20px;
  border-right: ${({ $first }) => ($first ? '1px solid #c8c8c8' : 'none')};
`;
const ResultRow = styled.div`
  height: 15px;
  display: flex;
  line-height: 15px;
  background: ${({ $alt }) => ($alt ? '#e9e7e3' : '#fff')};
`;
const FeatureCell = styled.div`
  width: 167px;
  flex: none;
  display: flex;
  align-items: center;
  box-sizing: border-box;
  padding-left: ${({ $depth }) => 3 + $depth * 20}px;
`;
const ResultTwisty = styled.span`
  width: 20px;
  flex: none;
  display: flex;
  justify-content: center;
`;
const ValueCell = styled.div`
  flex: 1;
`;
const FormArea = styled.div`
  height: 66px;
  flex: none;
  box-sizing: border-box;
  padding: 7px 5px 0 4px;
  display: flex;
  flex-direction: column;
  gap: 9px;
  font-size: 10.4px;
`;
const FormRow = styled.div`
  display: flex;
  align-items: center;
  height: 21px;
`;
const FormLabel = styled.span`
  width: ${({ $off }) => ($off ? 29 : 34)}px;
  flex: none;
  color: ${({ $off }) => ($off ? '#8a8a8a' : '#111')};
`;
const Combo = styled.div`
  width: ${({ $width }) => $width}px;
  height: 21px;
  box-sizing: border-box;
  display: flex;
  align-items: center;
  justify-content: space-between;
  padding: 0 7px 0 3px;
  border: 1px solid #b4b4b4;
  border-radius: 2px;
  background: ${({ $off }) => ($off ? '#f0f0f0' : '#fff')};
  color: ${({ $off }) => ($off ? '#8a8a8a' : '#111')};
`;
const AutoOpen = styled.div`
  margin-left: auto;
  display: flex;
  align-items: center;
  padding-right: 5px;
`;
const HelpButton = styled.div`
  margin-left: auto;
  width: 34px;
  height: 20px;
  box-sizing: border-box;
  text-align: center;
  line-height: 18px;
  border: 1px solid #b4b4b4;
  border-radius: 2px;
  background: #fff;
`;
const StatusBar = styled.div`
  height: 27px;
  flex: none;
  display: flex;
  align-items: center;
  padding: 0 0 0 4px;
  font-size: 10.2px;
`;
const Locator = styled.div`
  width: 200px;
  height: 22px;
  flex: none;
  box-sizing: border-box;
  display: flex;
  align-items: center;
  gap: 6px;
  padding-left: 8px;
  border: 1px solid #b4b4b4;
  border-radius: 2px;
  background: #fff;
  color: #777;
  font-size: 11px;
`;
const StatusMessage = styled.span`
  margin-left: 8px;
  width: 349px;
  flex: none;
  font-size: 10.6px;
`;
const StatusLabel = styled.span`
  flex: none;
  margin-right: 4px;
`;
const ScaleLabel = styled(StatusLabel)`
  margin-left: 12px;
  margin-right: 7px;
`;
const RotationLabel = styled(StatusLabel)`
  margin-left: 8px;
  margin-right: 5px;
`;
const Field = styled.div`
  width: ${({ $width }) => $width}px;
  height: 22px;
  flex: none;
  box-sizing: border-box;
  display: flex;
  align-items: center;
  padding-left: 3px;
  border: 1px solid #b4b4b4;
  border-radius: 2px;
  background: #fff;
  font-size: 10.8px;
  white-space: nowrap;
  overflow: hidden;
`;
const FieldDrop = styled.span`
  margin-left: auto;
  width: 17px;
  height: 100%;
  display: flex;
  align-items: center;
  justify-content: center;
  border-left: 1px solid #ccc;
`;
const Spin = styled.span`
  margin-left: auto;
  width: 12px;
  height: 100%;
  display: flex;
  flex-direction: column;
  align-items: center;
  justify-content: center;
  gap: 2px;
  border-left: 1px solid #ddd;
`;
const SpinUp = styled.i`
  width: 0;
  height: 0;
  border-left: 3px solid transparent;
  border-right: 3px solid transparent;
  border-bottom: 5px solid #666;
`;
const SpinDown = styled.i`
  width: 0;
  height: 0;
  border-left: 3px solid transparent;
  border-right: 3px solid transparent;
  border-top: 5px solid #666;
`;
const StatusIcon = styled.svg`
  width: 16px;
  height: 16px;
  flex: none;
  margin-left: 4px;
`;
const LockIcon = styled.svg`
  width: 13px;
  height: 17px;
  flex: none;
  margin: 0 7px 0 14px;
`;
const RenderBox = styled.div`
  display: flex;
  align-items: center;
  flex: none;
  margin-left: 7px;
`;
const Epsg = styled.div`
  display: flex;
  align-items: center;
  flex: none;
  gap: 3px;
  margin-left: 18px;
`;
const BubbleIcon = styled.svg`
  width: 17px;
  height: 17px;
  flex: none;
  margin-left: 22px;
`;
const Grip = styled.div`
  width: 9px;
  height: 9px;
  margin-left: auto;
  margin-right: 1px;
  align-self: flex-end;
  background-image: radial-gradient(circle, #aaa 0.7px, transparent 1px);
  background-size: 3px 3px;
`;
const Popup = styled.div`
  position: absolute;
  left: 771px;
  top: 85px;
  width: 225px;
  box-sizing: border-box;
  background: #fff;
  border: 1px solid #a0a0a0;
  box-shadow: 2px 2px 3px rgba(0, 0, 0, 0.5);
  display: flex;
  flex-direction: column;
`;
const PopupItem = styled.div`
  position: relative;
  height: 22.6px;
  display: flex;
  align-items: center;
  padding-left: 27px;
  background: ${({ $active }) => ($active ? '#0078d7' : 'transparent')};
  color: ${({ $active }) => ($active ? '#fff' : '#111')};
`;
const PopupIcon = styled.svg`
  position: absolute;
  left: 6px;
  top: 3px;
  width: 16px;
  height: 16px;
`;
